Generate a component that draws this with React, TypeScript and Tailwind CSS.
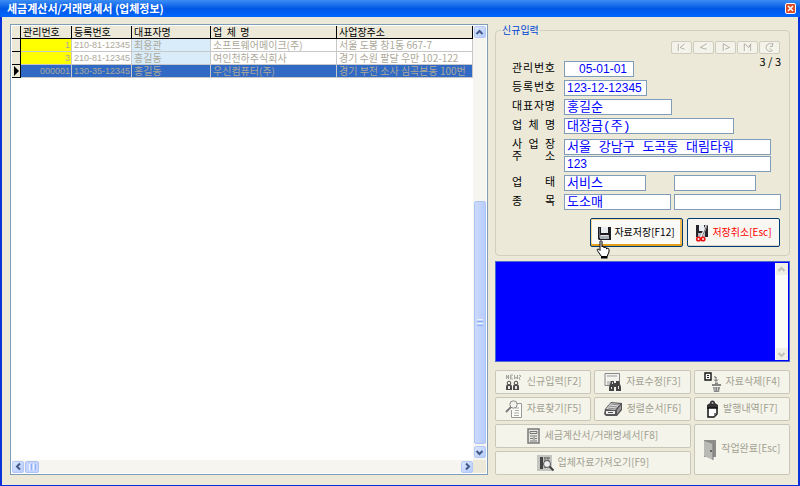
import type { ReactNode } from 'react'

const HANGUL = "font-['Noto_Sans_CJK_KR',sans-serif]"
const WIDE = "font-['Liberation_Mono','Noto_Sans_CJK_KR',monospace]"
const NUMERIC = "font-['Liberation_Sans','Noto_Sans_CJK_KR',sans-serif]"

const rows = [
  { id: '1', reg: '210-81-12345', owner: '최용관', company: '소프트웨어메이크(주)', address: '서울 도봉 창1동 667-7' },
  { id: '3', reg: '210-81-12345', owner: '홍길동', company: '여인천하주식회사', address: '경기 수원 팔달 우만 102-122' },
  { id: '000001', reg: '130-35-12345', owner: '홍길동', company: '우신컴퓨터(주)', address: '경기 부천 소사 심곡본동 100번', selected: true },
]

function Chevron({ dir, muted }: { dir: 'up' | 'down' | 'left' | 'right'; muted?: boolean }) {
  const d = {
    up: 'M1.5 6 4.5 3 7.5 6',
    down: 'M1.5 3 4.5 6 7.5 3',
    left: 'M6 1.5 3 4.5 6 7.5',
    right: 'M3 1.5 6 4.5 3 7.5',
  }[dir]
  return (
    <svg width="9" height="9" viewBox="0 0 9 9" fill="none" aria-hidden="true">
      <path d={d} stroke={muted ? '#c3c2b8' : '#435a88'} strokeWidth="2" />
    </svg>
  )
}

function ScrollButton({ dir, label, muted }: { dir: 'up' | 'down' | 'left' | 'right'; label: string; muted?: boolean }) {
  return (
    <button
      type="button"
      aria-label={label}
      disabled={muted}
      className={`flex size-3 shrink-0 items-center justify-center rounded-xs ${
        muted ? 'bg-[#f0efe6]' : 'border border-[#b4c8f6] bg-linear-to-br from-[#dce7fe] to-[#b5cbfa]'
      }`}
    >
      <Chevron dir={dir} muted={muted} />
    </button>
  )
}

const headCell = 'h-[13px] border-r border-b border-black p-0 pl-0.5 text-left font-normal'
const cell = 'h-[13px] border-r border-b border-[#c8c8c8] p-0 pl-0.5'

function CompanyTable() {
  return (
    <table className={`w-full table-fixed border-separate border-spacing-0 whitespace-nowrap text-[10px] leading-3 ${HANGUL}`}>
      <colgroup>
        <col className="w-[9px]" />
        <col className="w-[51px]" />
        <col className="w-[60px]" />
        <col className="w-[79px]" />
        <col className="w-[126px]" />
        <col />
      </colgroup>
      <thead className="bg-[#ece9d8] text-black">
        <tr>
          <th className={headCell} />
          <th className={headCell}>관리번호</th>
          <th className={headCell}>등록번호</th>
          <th className={headCell}>대표자명</th>
          <th className={headCell}>업&nbsp; 체&nbsp; 명</th>
          <th className={headCell}>사업장주소</th>
        </tr>
      </thead>
      <tbody className="text-[#aca899]">
        {rows.map((r) => (
          <tr key={r.id} className={r.selected ? 'bg-[#316ac5]' : 'bg-white'}>
            <td className="h-[13px] border-r border-b border-black bg-[#ece9d8] p-0">
              {r.selected && (
                <svg width="8" height="10" viewBox="0 0 8 10" className="block" aria-hidden="true">
                  <path d="M2 0v10l5-5z" fill="#000" />
                </svg>
              )}
            </td>
            <td className={`${cell} pr-px text-right text-[9px] ${NUMERIC} ${r.selected ? '' : 'bg-[#ffff00]'}`}>{r.id}</td>
            <td className={`${cell} text-[9px] ${NUMERIC}`}>{r.reg}</td>
            <td className={`${cell} ${r.selected ? '' : 'bg-[#d9ecf9]'}`}>{r.owner}</td>
            <td className={cell}>{r.company}</td>
            <td className={cell}>{r.address}</td>
          </tr>
        ))}
      </tbody>
    </table>
  )
}

function ListPanel() {
  return (
    <section className="flex min-w-0 flex-1 flex-col border border-[#7f9db9] bg-white p-px">
      <div className="flex flex-1">
        <div className="min-w-0 flex-1 overflow-hidden">
          <CompanyTable />
        </div>
        <div className="flex w-[13px] flex-col items-center bg-[#f6f5f0] pb-0.5">
          <ScrollButton dir="up" label="위로" />
          <div className="flex-[164]" />
          <div className="mb-0.5 flex w-3 flex-[243] flex-col items-center justify-center gap-px rounded-xs border border-[#aec3f5] bg-linear-to-r from-[#cbdafd] to-[#b9cdfb]">
            <i className="h-px w-1.5 bg-[#eef4fe]" />
            <i className="h-px w-1.5 bg-[#8cb0f8]" />
            <i className="h-px w-1.5 bg-[#eef4fe]" />
            <i className="h-px w-1.5 bg-[#8cb0f8]" />
          </div>
          <ScrollButton dir="down" label="아래로" />
        </div>
      </div>
      <div className="flex h-[13px] items-center bg-[#f6f5f0]">
        <ScrollButton dir="left" label="왼쪽" />
        <div className="ml-px flex h-3 w-3.5 items-center justify-center gap-px rounded-xs border border-[#aec3f5] bg-[#c5d5fd]">
          <i className="h-1.5 w-px bg-[#eef4fe]" />
          <i className="h-1.5 w-px bg-[#8cb0f8]" />
          <i className="h-1.5 w-px bg-[#eef4fe]" />
          <i className="h-1.5 w-px bg-[#8cb0f8]" />
        </div>
        <div className="flex-1" />
        <ScrollButton dir="right" label="오른쪽" />
        <div className="h-full w-[13px] bg-[#ece9d8]" />
      </div>
    </section>
  )
}

function FieldLabel({ htmlFor, text }: { htmlFor: string; text: string }) {
  return (
    <label htmlFor={htmlFor} className="flex w-[43px] justify-between pb-1 text-[11px] leading-3">
      {text.split('').map((c, i) => (
        <span key={i}>{c}</span>
      ))}
    </label>
  )
}

function Field({ id, value, width, numeric, right, label }: {
  id: string
  value?: string
  width: string
  numeric?: boolean
  right?: boolean
  label?: string
}) {
  return (
    <input
      id={id}
      aria-label={label}
      defaultValue={value}
      className={`block h-4 border border-[#7f9db9] bg-white px-0.5 leading-3 text-[#0000ff] outline-none ${width} ${
        numeric ? `text-[12px] ${NUMERIC}` : `pb-[3px] text-[13px] ${WIDE}`
      } ${right ? 'pr-1.5 text-right' : ''}`}
    />
  )
}

const navIcons = [
  { label: '처음', d: 'M3 2v8M10 2 5 6l5 2' },
  { label: '이전', d: 'M10 2 3 6l7 2' },
  { label: '다음', d: 'M4 10V2l7 4-5 2' },
  { label: '마지막', d: 'M3 10V2l5 4 2-4v8' },
  { label: '새로고침', d: 'M10 3C7 0 2 3 3 7c1 3 4 4 6 3M10 1v4H7M7 7l3 3' },
]

function NavButtons() {
  return (
    <div className="flex justify-end gap-px">
      {navIcons.map((n) => (
        <button key={n.label} type="button" disabled aria-label={n.label} className="flex h-[13px] w-[21px] items-center justify-center rounded-xs border border-[#cfcdbf] bg-[#f4f3ea]">
          <svg width="13" height="11" viewBox="0 0 13 12" fill="none" aria-hidden="true">
            <path d={n.d} stroke="#fff" strokeWidth="1" transform="translate(1 1)" />
            <path d={n.d} stroke="#aba99b" strokeWidth="1" />
          </svg>
        </button>
      ))}
    </div>
  )
}

function SaveIcon() {
  return (
    <svg width="13" height="14" viewBox="0 0 13 14" aria-hidden="true">
      <path d="M0 1h13v13H1L0 13z" fill="#1d1d22" />
      <path d="M3 1h7v6H3z" fill="#e9edf2" />
      <path d="M2 9h9v4H2z" fill="#aab0b8" />
      <path d="M3 9h7v1H3z" fill="#e4e6ea" />
      <path d="M1 2h1v10H1z" fill="#666b75" />
    </svg>
  )
}

function CancelIcon() {
  return (
    <svg width="14" height="18" viewBox="0 0 14 18" aria-hidden="true">
      <path d="M1 1h12v12H1z" fill="#25252b" />
      <path d="M4 1h5v6H4z" fill="#eceff3" />
      <path d="M3 9h7v4H3z" fill="#b4b8bf" />
      <path d="M11 0h2L8 13H5z" fill="#f2f2f2" />
      <path d="M12 1 7 13" stroke="#777" />
      <circle cx="3.5" cy="15" r="1.8" fill="none" stroke="#e11" strokeWidth="1.6" />
      <circle cx="8" cy="15" r="1.8" fill="none" stroke="#e11" strokeWidth="1.6" />
    </svg>
  )
}

function HandCursor() {
  return (
    <svg width="16" height="19" viewBox="0 0 16 19" className="pointer-events-none absolute top-[22px] left-[6px]" aria-hidden="true">
      <path
        d="M4 1.5C4 .5 6 .5 6 1.5V7c0-1 2-1 2 0v1c0-1 2.500-1 2.500 0v1c0-1 2.500-1 2.500.5V12l-2 4.500H5.500L2 11.500C.5 9.500 1.500 8.500 3 9.500l1 1z"
        fill="#fff"
        stroke="#000"
      />
      <path d="M5 16h6.500v2.500H5z" fill="#000" />
    </svg>
  )
}

const formButton =
  'flex h-[29px] w-[93px] items-center justify-center gap-[3px] rounded-xs border border-[#003c74] whitespace-nowrap'

function EntryForm() {
  return (
    <fieldset className="m-0 min-w-0 rounded-sm border border-[#d0d0bf] px-2 pb-2">
      <legend className="ml-[-3px] px-px text-[10px] leading-3 text-[#0046d5]">신규입력</legend>
      <div className="mt-[5px] pr-px">
        <NavButtons />
      </div>
      <div className="flex h-[7px] justify-end">
        <span className="text-[11px] leading-[14px]">3 / 3</span>
      </div>
      <div className="grid grid-cols-[52px_1fr] items-center gap-y-[3px] pl-2">
        <FieldLabel htmlFor="code" text="관리번호" />
        <Field id="code" value="05-01-01" width="w-[70px]" numeric right />
        <FieldLabel htmlFor="reg" text="등록번호" />
        <Field id="reg" value="123-12-12345" width="w-[83px]" numeric />
        <FieldLabel htmlFor="owner" text="대표자명" />
        <Field id="owner" value="홍길순" width="w-[108px]" />
        <FieldLabel htmlFor="company" text="업체명" />
        <Field id="company" value="대장금(주)" width="w-[170px]" />
        <label htmlFor="addr" className="flex w-[43px] flex-col self-start text-[11px] leading-3">
          <span className="flex justify-between"><span>사</span><span>업</span><span>장</span></span>
          <span className="flex justify-between"><span>주</span><span>소</span></span>
        </label>
        <div className="mt-0.5 flex flex-col gap-px">
          <Field id="addr" value="서울 강남구 도곡동 대림타워" width="w-[207px]" />
          <Field id="addr2" value="123" width="w-[207px]" numeric label="주소 2" />
        </div>
        <FieldLabel htmlFor="kind" text="업태" />
        <div className="flex gap-7">
          <Field id="kind" value="서비스" width="w-[82px]" />
          <Field id="kind2" width="w-[82px]" label="업태 2" />
        </div>
        <FieldLabel htmlFor="item" text="종목" />
        <div className="flex gap-[3px]">
          <Field id="item" value="도소매" width="w-[107px]" />
          <Field id="item2" width="w-[107px]" label="종목 2" />
        </div>
      </div>
      <div className="mt-2 flex justify-end gap-1 pr-px text-[10px]">
        <div className="relative">
          <button type="button" className={`${formButton} bg-[#fafaf6] shadow-[inset_0_-2px_0_#e5a01a,inset_-2px_0_0_#f3bd57,inset_1px_1px_0_#fbd791]`}>
            <SaveIcon />
            <span className="pb-0.5">자료저장[F12]</span>
          </button>
          <HandCursor />
        </div>
        <button type="button" className={`${formButton} bg-[#f8f7f2] text-[#ff0000] shadow-[inset_0_-1px_0_#d8d4c6]`}>
          <CancelIcon />
          <span className="pb-0.5">저장취소[Esc]</span>
        </button>
      </div>
    </fieldset>
  )
}

function MemoBox() {
  return (
    <div className="mt-[5px] flex h-[101px] border border-[#4a6ad0] bg-[#0000ff]">
      <textarea aria-label="메모" className="min-w-0 flex-1 resize-none bg-[#0000ff] p-1 text-[12px] text-white outline-none" />
      <div className="my-px mr-px flex w-[13px] flex-col items-center justify-between bg-[#fbfbf8]">
        <ScrollButton dir="up" label="메모 위로" muted />
        <ScrollButton dir="down" label="메모 아래로" muted />
      </div>
    </div>
  )
}

const icons: Record<string, ReactNode> = {
  add: (
    <svg width="18" height="18" viewBox="0 0 18 18" fill="none" aria-hidden="true">
      <path d="M1.500 6V2l2 4V2M8 2H5.500v4H8M5.500 4H7M9.500 2v4L11 4l1.500 2V2M14 2l2 1-2 2 1 2" stroke="#a4a49c" />
      <path d="M1 17v-3c0-2 1-3 3-3s3 1 3 3v3zM8 17v-3c0-2 1-3 3-3s3 1 3 3v3z" fill="#4c4c4c" />
      <circle cx="4" cy="10" r="1.800" fill="#f4f3ea" stroke="#4c4c4c" />
      <circle cx="11" cy="10" r="1.800" fill="#f4f3ea" stroke="#4c4c4c" />
      <path d="M3 13h2v3H3zM10 13h2v3h-2z" fill="#e8e8e0" />
    </svg>
  ),
  edit: (
    <svg width="18" height="18" viewBox="0 0 18 18" fill="none" aria-hidden="true">
      <path d="M1 .5h14.500v12H1z" fill="#f3f3ee" stroke="#888" />
      <path d="M3 3h10M3 9h4M3 11h3" stroke="#999" />
      <path d="M7 8h3v2h2V8h3l2 6v4h-5v-4h-2v4H5v-4z" fill="#444" />
      <path d="M7 14h1v2H7zM14 13h1v3h-1zM8 9h1v2H8z" fill="#ddd" />
    </svg>
  ),
  remove: (
    <svg width="18" height="20" viewBox="0 0 18 20" fill="none" aria-hidden="true">
      <path d="M1 1h6v7H1z" fill="#f8f8f8" stroke="#111" strokeWidth="1.400" />
      <path d="M3 3h2v1H3zM3 5h2v1H3z" fill="#222" />
      <path d="M10 5h2v4M10 7.500l2 2 2-2" stroke="#666" />
      <path d="M8 12h9v2H8zM11 10.500h3v1.500h-3zM9 15h7l-1 5h-5z" fill="#858585" />
      <path d="M11 15v4M13.500 15v4" stroke="#ccc" />
    </svg>
  ),
  find: (
    <svg width="18" height="18" viewBox="0 0 18 18" fill="none" aria-hidden="true">
      <path d="M5.500 3.500h11v14h-10V10" fill="#fbfbf7" stroke="#999" />
      <path d="M10 8h4M10 10.500h4M9 13h5M9 15.500h5" stroke="#aaa" />
      <circle cx="8.500" cy="4.500" r="3.700" fill="#f2f2ee" stroke="#888" />
      <path d="m6 7-5 5" stroke="#777" strokeWidth="1.800" />
    </svg>
  ),
  sort: (
    <svg width="19" height="16" viewBox="0 0 19 16" aria-hidden="true">
      <path d="m1 8 6-7 11 1v7l-5 6H2l-2-2z" fill="#555" />
      <path d="m2 8 5-6 9 1-5 6z" fill="#ddd" />
      <path d="m5 5 8 1M4 7l8 1M7 3l8 1" stroke="#888" />
      <path d="M2 10h9v3H2z" fill="#eee" />
      <path d="M4 11h5v1H4z" fill="#555" />
      <path d="m13 9 4-5v4l-4 5z" fill="#999" />
    </svg>
  ),
  issue: (
    <svg width="13" height="18" viewBox="0 0 13 18" aria-hidden="true">
      <path d="M4 3a2.500 2.500 0 0 1 5 0l3 2v4H1V5z" fill="#333" />
      <circle cx="6.500" cy="3" r="1" fill="#aaa" />
      <path d="M2 8h9v6l-3 3H2z" fill="#fff" stroke="#111" strokeWidth="1.500" />
      <path d="M11 13H8v4z" fill="#777" />
    </svg>
  ),
  invoice: (
    <svg width="13" height="16" viewBox="0 0 13 16" fill="none" aria-hidden="true">
      <path d="M1 1h11v14H1z" fill="#e8e8e2" stroke="#777" strokeWidth="1.500" />
      <path d="M3 3.500h7v2H3zM3 8h3M8 8h2M3 10.500h3M8 10.500h2M3 13h3M8 13h2M7 7v7" stroke="#777" />
    </svg>
  ),
  bring: (
    <svg width="17" height="17" viewBox="0 0 17 17" fill="none" aria-hidden="true">
      <path d="M0 0h15v16H0z" fill="#c4c4c0" />
      <path d="M3 2h3v12H3z" fill="#444" />
      <path d="M7 3h6M7 6h6M7 9h3M7 12h3M8 2v11M11 2v5" stroke="#666" />
      <circle cx="10" cy="9" r="3.500" fill="#eee" stroke="#555" />
      <path d="m12.500 11.500 4 4" stroke="#444" strokeWidth="2" />
    </svg>
  ),
  door: (
    <svg width="14" height="20" viewBox="0 0 14 20" aria-hidden="true">
      <path d="M1 0h12v17H1z" fill="#8d8d8a" />
      <path d="m1 1 9 3v16l-9-4z" fill="#b9b9b5" />
      <path d="M10 4v16" stroke="#777" />
      <path d="M7 10h2v2H7z" fill="#666" />
    </svg>
  ),
}

const actions = [
  { icon: 'add', text: '신규입력[F2]', span: '' },
  { icon: 'edit', text: '자료수정[F3]', span: '' },
  { icon: 'remove', text: '자료삭제[F4]', span: '' },
  { icon: 'find', text: '자료찾기[F5]', span: '' },
  { icon: 'sort', text: '정렬순서[F6]', span: '' },
  { icon: 'issue', text: '발행내역[F7]', span: '' },
  { icon: 'invoice', text: '세금계산서/거래명세서[F8]', span: 'col-span-2' },
  { icon: 'door', text: '작업완료[Esc]', span: 'row-span-2' },
  { icon: 'bring', text: '업체자료가져오기[F9]', span: 'col-span-2' },
]

function ActionButtons() {
  return (
    <div className="mt-2 grid auto-rows-[24px] grid-cols-3 gap-[3px]">
      {actions.map((a) => (
        <button
          key={a.icon}
          type="button"
          disabled
          className={`flex items-center justify-center gap-1 rounded-xs border border-[#c9c7ba] bg-[#f5f4ea] text-[10px] whitespace-nowrap text-[#a1a192] ${a.span}`}
        >
          {icons[a.icon]}
          <span className="pb-1">{a.text}</span>
        </button>
      ))}
    </div>
  )
}

export default function App() {
  return (
    <div className={`flex min-h-screen flex-col bg-[#ece9d8] text-black ${HANGUL}`}>
      <header className="flex h-[17px] items-center justify-between bg-linear-to-b from-[#3b8df5] via-[#0058e6] to-[#0066ff] pr-1 pl-[7px]">
        <h1 className="pb-0.5 text-[11px] leading-[14px] font-bold text-white">세금계산서/거래명세서 (업체정보)</h1>
        <button type="button" aria-label="닫기" className="flex size-[11px] items-center justify-center rounded-xs border border-white bg-[#dd4a24]">
          <svg width="7" height="7" viewBox="0 0 7 7" aria-hidden="true">
            <path d="m1 1 5 5M6 1 1 6" stroke="#fff" strokeWidth="1.500" />
          </svg>
        </button>
      </header>
      <main className="flex flex-1 gap-[7px] border-r-2 border-b-2 border-l-2 border-[#0831d9] px-2 pt-[7px] pb-2.5">
        <ListPanel />
        <div className="w-[295px] shrink-0">
          <EntryForm />
          <MemoBox />
          <ActionButtons />
        </div>
      </main>
    </div>
  )
}
